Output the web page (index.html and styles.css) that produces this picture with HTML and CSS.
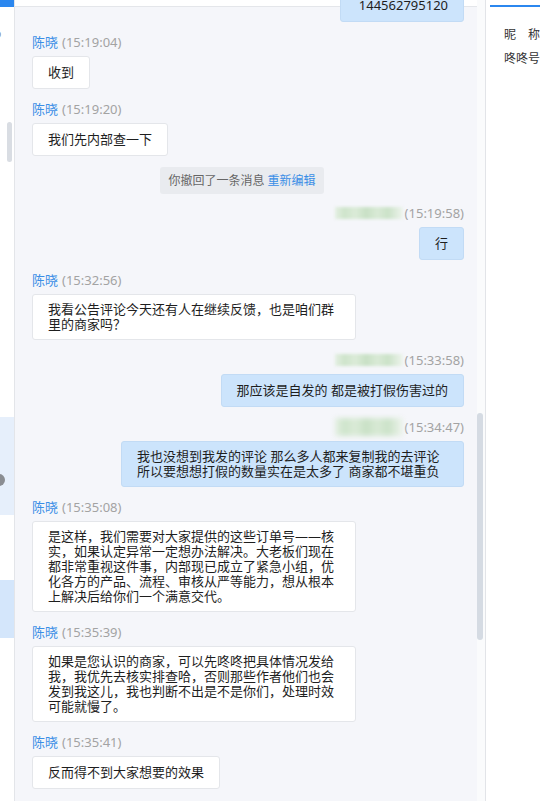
FILE: index.html
```html
<!DOCTYPE html>
<html lang="zh-CN">
<head>
<meta charset="utf-8">
<title>聊天</title>
<link rel="stylesheet" href="styles.css">
</head>
<body>
<div class="app">
  <aside class="sidebar">
    <div class="sb-top"></div>
    <div class="sb-glyph">o</div>
    <div class="sb-thumb"></div>
    <div class="sb-item sb-item-a"><span class="sb-dot"></span></div>
    <div class="sb-item sb-item-b"></div>
  </aside>

  <section class="chat">
    <div class="chat-head"></div>
    <div class="chat-body">
      <div class="messages">
        <div class="msg msg-out msg-first">
          <div class="bubble bubble-first">144562795120</div>
        </div>

        <div class="msg msg-in">
          <div class="meta"><span class="name">陈晓</span><span class="time">(15:19:04)</span></div>
          <div class="bubble">收到</div>
        </div>

        <div class="msg msg-in">
          <div class="meta"><span class="name">陈晓</span><span class="time">(15:19:20)</span></div>
          <div class="bubble">我们先内部查一下</div>
        </div>

        <div class="recall">你撤回了一条消息 <span class="recall-link">重新编辑</span></div>

        <div class="msg msg-out">
          <div class="meta"><span class="mosaic"></span><span class="time">(15:19:58)</span></div>
          <div class="bubble">行</div>
        </div>

        <div class="msg msg-in">
          <div class="meta"><span class="name">陈晓</span><span class="time">(15:32:56)</span></div>
          <div class="bubble">我看公告评论今天还有人在继续反馈，也是咱们群里的商家吗？</div>
        </div>

        <div class="msg msg-out">
          <div class="meta"><span class="mosaic"></span><span class="time">(15:33:58)</span></div>
          <div class="bubble">那应该是自发的 都是被打假伤害过的</div>
        </div>

        <div class="msg msg-out">
          <div class="meta"><span class="mosaic mosaic-big"></span><span class="time">(15:34:47)</span></div>
          <div class="bubble">我也没想到我发的评论 那么多人都来复制我的去评论所以要想想打假的数量实在是太多了 商家都不堪重负</div>
        </div>

        <div class="msg msg-in">
          <div class="meta"><span class="name">陈晓</span><span class="time">(15:35:08)</span></div>
          <div class="bubble">是这样，我们需要对大家提供的这些订单号——核实，如果认定异常一定想办法解决。大老板们现在都非常重视这件事，内部现已成立了紧急小组，优化各方的产品、流程、审核从严等能力，想从根本上解决后给你们一个满意交代。</div>
        </div>

        <div class="msg msg-in">
          <div class="meta"><span class="name">陈晓</span><span class="time">(15:35:39)</span></div>
          <div class="bubble">如果是您认识的商家，可以先咚咚把具体情况发给我，我优先去核实排查哈，否则那些作者他们也会发到我这儿，我也判断不出是不是你们，处理时效可能就慢了。</div>
        </div>

        <div class="msg msg-in">
          <div class="meta"><span class="name">陈晓</span><span class="time">(15:35:41)</span></div>
          <div class="bubble">反而得不到大家想要的效果</div>
        </div>
      </div>
      <div class="scroll-track"><div class="scroll-thumb"></div></div>
    </div>
  </section>

  <aside class="panel">
    <div class="panel-tabs"><div class="tab-line"></div></div>
    <div class="panel-info">
      <div class="info-row">昵　称</div>
      <div class="info-row">咚咚号</div>
    </div>
  </aside>
</div>
</body>
</html>
```

FILE: styles.css
```css
html, body {
  margin: 0;
  padding: 0;
}

body {
  width: 540px;
  height: 801px;
  overflow: hidden;
  background: #ffffff;
  font-family: "Noto Sans", "Noto Sans CJK SC", sans-serif;
  font-size: 13px;
  color: #1e1e1e;
}

.app {
  display: flex;
  height: 801px;
  overflow: hidden;
}

/* ---------- left list strip ---------- */
.sidebar {
  width: 14px;
  flex: none;
  border-right: 1px solid #e3e5e9;
  background: #ffffff;
  display: flex;
  flex-direction: column;
  overflow: hidden;
}

.sb-top {
  height: 7px;
  background: #2b87ef;
}

.sb-glyph {
  margin-top: 21px;
  margin-left: -6px;
  height: 12px;
  line-height: 12px;
  font-size: 12px;
  color: #888888;
}

.sb-thumb {
  margin-top: 82px;
  margin-left: 7px;
  width: 5px;
  height: 40px;
  border-radius: 3px;
  background: #d9dde3;
}

.sb-item {
  display: flex;
  align-items: center;
}

.sb-item-a {
  margin-top: 255px;
  height: 98px;
  background: #e6effb;
}

.sb-dot {
  width: 12px;
  height: 12px;
  margin-left: -7px;
  margin-top: 28px;
  border-radius: 50%;
  background: #8a8d92;
}

.sb-item-b {
  margin-top: 65px;
  height: 58px;
  background: #d4e6fb;
}

/* ---------- chat ---------- */
.chat {
  width: 470px;
  flex: none;
  border-right: 1px solid #e2e4e8;
  background: #f5f6fa;
  display: flex;
  flex-direction: column;
  overflow: hidden;
}

.chat-head {
  height: 6px;
  flex: none;
  background: #ffffff;
  border-bottom: 1px solid #e4e6ea;
}

.chat-body {
  margin-top: -7px;
  position: relative;
  flex: 1;
  display: flex;
  min-height: 0;
}

.messages {
  flex: 1;
  padding: 0 13px 0 17px;
  display: flex;
  flex-direction: column;
  gap: 12px;
}

.scroll-track {
  width: 8px;
  flex: none;
  background: #fafbfc;
}

.scroll-thumb {
  margin-top: 413px;
  width: 6px;
  height: 227px;
  border-radius: 3px;
  background: #d5dbe3;
}

.msg {
  display: flex;
  flex-direction: column;
}

.msg-in {
  align-items: flex-start;
}

.msg-out {
  align-items: flex-end;
}

.msg-first {
  margin-top: -11px;
}

.meta {
  height: 16px;
  line-height: 16px;
  margin-bottom: 6px;
  display: flex;
  align-items: center;
  white-space: nowrap;
  font-size: 13px;
}

.name {
  color: #3a8ee6;
  margin-right: 4px;
  font-family: "Noto Sans CJK SC", sans-serif;
}

.time {
  color: #a3a3a3;
}

.mosaic {
  display: inline-block;
  width: 68px;
  height: 12px;
  margin-right: 2px;
  background: linear-gradient(90deg, #e4efe2 0%, #cee4cb 14%, #dbebd8 30%, #c8e0c5 46%, #d9ead6 62%, #cbe2c8 78%, #eef4ed 100%);
  filter: blur(1.4px);
}

.mosaic-big {
  height: 18px;
  filter: blur(2.5px);
}

.bubble {
  box-sizing: border-box;
  min-height: 33px;
  display: flex;
  align-items: center;
  padding: 7px 15px;
  line-height: 15px;
  border-radius: 3px;
}

.bubble-first {
  padding-left: 18px;
}

.msg-in .bubble {
  max-width: 324px;
  background: #ffffff;
  border: 1px solid #e4e6ea;
}

.msg-out .bubble {
  max-width: 343px;
  background: #cce4fc;
  border: 1px solid #c2dbf5;
}

.recall {
  align-self: center;
  margin: -1px 12px -1px 0;
  height: 27px;
  line-height: 27px;
  padding: 0 8px;
  border-radius: 3px;
  background: #e9ebef;
  color: #666666;
  font-size: 12px;
  white-space: nowrap;
}

.recall-link {
  color: #3a8ee6;
}

/* ---------- right panel ---------- */
.panel {
  flex: 1;
  min-width: 0;
  background: #ffffff;
  overflow: hidden;
}

.panel-tabs {
  height: 7px;
  padding-left: 4px;
}

.tab-line {
  margin-top: 5px;
  height: 2px;
  background: #2b87ef;
}

.panel-info {
  padding: 10px 0 0 18px;
}

.info-row {
  height: 24px;
  line-height: 24px;
  font-size: 12px;
  color: #333333;
  white-space: nowrap;
  font-family: "Noto Sans CJK SC", sans-serif;
}
```
